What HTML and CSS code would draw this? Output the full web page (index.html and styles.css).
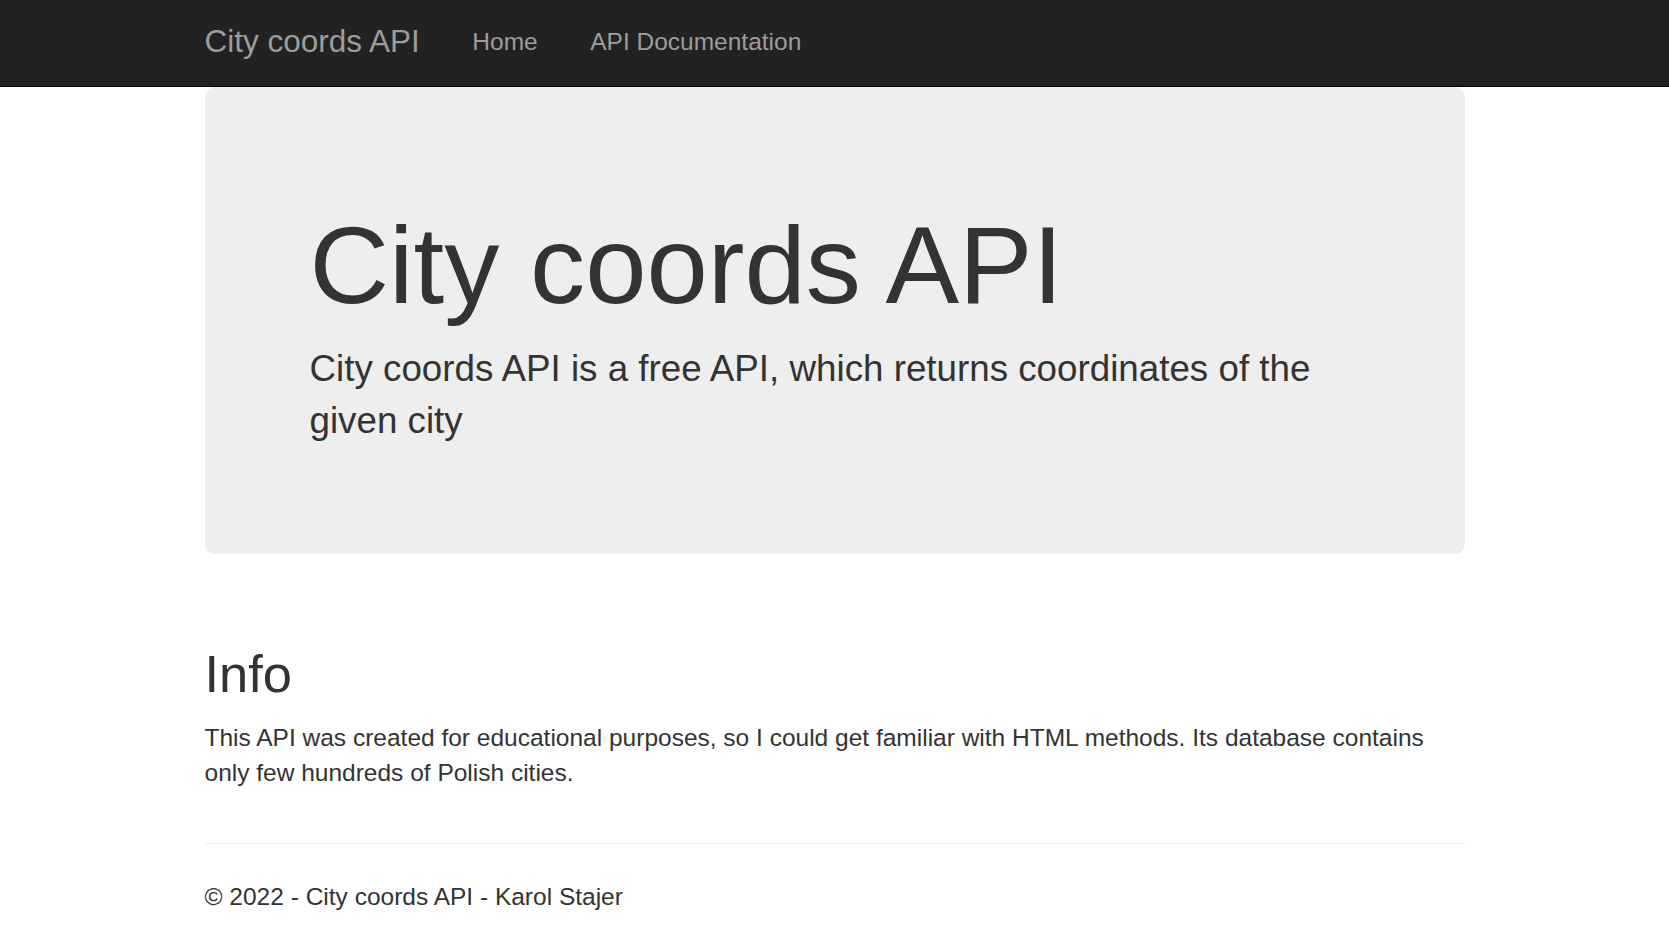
FILE: index.html
```html
<!DOCTYPE html>
<html lang="en">
<head>
<meta charset="utf-8">
<title>City coords API</title>
<link rel="stylesheet" href="styles.css">
</head>
<body>
<header class="navbar">
  <div class="container navbar-inner">
    <a class="navbar-brand" href="#">City coords API</a>
    <ul class="navbar-nav">
      <li><a href="#">Home</a></li>
      <li><a href="#">API Documentation</a></li>
    </ul>
  </div>
</header>
<main class="container body-content">
  <section class="jumbotron">
    <h1>City coords API</h1>
    <p class="lead">City coords API is a free API, which returns coordinates of the given city</p>
  </section>
  <section class="info">
    <h2>Info</h2>
    <p>This API was created for educational purposes, so I could get familiar with HTML methods. Its database contains only few hundreds of Polish cities.</p>
  </section>
  <hr class="divider">
  <footer class="footer">
    <p>&copy; 2022 - City coords API - Karol Stajer</p>
  </footer>
</main>
</body>
</html>
```
FILE: styles.css
```css
* { box-sizing: border-box; }
html, body { margin: 0; padding: 0; }
body {
  font-family: "Liberation Sans", Arial, Helvetica, sans-serif;
  font-size: 24.5px;
  line-height: 35px;
  color: #333;
  background: #fff;
}
a { text-decoration: none; }

.container {
  width: 1312.5px;
  margin: 0 auto;
  padding: 0 26.25px;
}

.navbar {
  background: #222;
  border-bottom: 1px solid #080808;
  height: 87px;
}
.navbar-inner {
  display: flex;
  align-items: flex-start;
}
.navbar-brand {
  color: #9d9d9d;
  font-size: 31.5px;
  line-height: 35px;
  padding: 23.5px 26.25px;
  margin-left: -26.25px;
}
.navbar-nav {
  display: flex;
  list-style: none;
  margin: 0;
  padding: 0;
}
.navbar-nav a {
  display: block;
  color: #9d9d9d;
  font-size: 24.5px;
  line-height: 35px;
  padding: 23.5px 26.25px;
}

.jumbotron {
  background: #eee;
  border-radius: 10.5px;
  padding: 84px 105px 80px;
  margin-bottom: 52.5px;
}
.jumbotron h1 {
  font-size: 110.25px;
  font-weight: 500;
  line-height: 1.1;
  margin: 33px 0 17.5px;
}
.jumbotron .lead {
  font-size: 36.75px;
  font-weight: 200;
  line-height: 52.5px;
  margin: 0 0 26.25px;
}

.info {
  display: flow-root;
}
.info h2 {
  font-size: 52.5px;
  font-weight: 500;
  line-height: 1.1;
  margin: 38px 0 17.5px;
}
.info p {
  margin: 0 0 17.5px;
}

.divider {
  border: 0;
  border-top: 1.75px solid #eee;
  margin: 36px 0 35px;
}
.footer p {
  margin: 0;
}
```
